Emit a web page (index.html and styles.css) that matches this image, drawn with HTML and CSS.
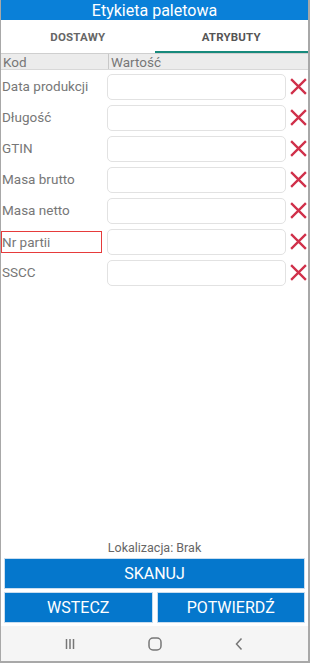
FILE: index.html
```html
<!DOCTYPE html>
<html lang="pl">
<head>
<meta charset="utf-8">
<title>Etykieta paletowa</title>
<link rel="stylesheet" href="styles.css">
</head>
<body>
<div class="screen">
  <div class="title">Etykieta paletowa</div>
  <div class="tabs">
    <div class="tab">DOSTAWY</div>
    <div class="tab active">ATRYBUTY</div>
  </div>
  <div class="colhead">
    <div class="ch-kod">Kod</div>
    <div class="ch-val">Wartość</div>
  </div>
  <div class="rows">
    <div class="row"><div class="label">Data produkcji</div><div class="input"></div><svg class="del" viewBox="0 0 18 18"><path d="M2 2L16 16M16 2L2 16"/></svg></div>
    <div class="row"><div class="label">Długość</div><div class="input"></div><svg class="del" viewBox="0 0 18 18"><path d="M2 2L16 16M16 2L2 16"/></svg></div>
    <div class="row"><div class="label">GTIN</div><div class="input"></div><svg class="del" viewBox="0 0 18 18"><path d="M2 2L16 16M16 2L2 16"/></svg></div>
    <div class="row"><div class="label">Masa brutto</div><div class="input"></div><svg class="del" viewBox="0 0 18 18"><path d="M2 2L16 16M16 2L2 16"/></svg></div>
    <div class="row"><div class="label">Masa netto</div><div class="input"></div><svg class="del" viewBox="0 0 18 18"><path d="M2 2L16 16M16 2L2 16"/></svg></div>
    <div class="row"><div class="label focused">Nr partii</div><div class="input"></div><svg class="del" viewBox="0 0 18 18"><path d="M2 2L16 16M16 2L2 16"/></svg></div>
    <div class="row"><div class="label">SSCC</div><div class="input"></div><svg class="del" viewBox="0 0 18 18"><path d="M2 2L16 16M16 2L2 16"/></svg></div>
  </div>
  <div class="spacer"></div>
  <div class="loc">Lokalizacja: Brak</div>
  <div class="actions">
    <button class="btn wide">SKANUJ</button>
    <div class="pair">
      <button class="btn">WSTECZ</button>
      <button class="btn">POTWIERDŹ</button>
    </div>
  </div>
  <div class="navbar">
    <svg class="nav" viewBox="0 0 20 20"><path d="M6.5 5V15M10 5V15M13.5 5V15"/></svg>
    <svg class="nav" viewBox="0 0 20 20"><rect x="4" y="4" width="12" height="12" rx="4"/></svg>
    <svg class="nav" viewBox="0 0 20 20"><path d="M12.5 4.5L7.5 10L12.5 15.5"/></svg>
  </div>
</div>
</body>
</html>
```
FILE: styles.css
```css
* { box-sizing: border-box; }
html, body { margin: 0; padding: 0; background: #fff; }
body { font-family: Roboto, "Noto Sans", sans-serif; }
.screen {
  width: 310px;
  height: 663px;
  display: flex;
  flex-direction: column;
  border-left: 1px solid #a8a8a8;
  border-right: 2px solid #a8a8a8;
  border-bottom: 2px solid #a8a8a8;
  overflow: hidden;
}
.title {
  height: 20px;
  background: #0a80d8;
  color: #fff;
  font-size: 16px;
  line-height: 21px;
  text-align: center;
}
.tabs {
  display: grid;
  grid-template-columns: 1fr 1fr;
  height: 33px;
  background: #fff;
}
.tab {
  display: flex;
  align-items: center;
  justify-content: center;
  font-size: 11.5px;
  font-weight: bold;
  color: #666;
  letter-spacing: 0.2px;
  border-bottom: 2px solid transparent;
  padding-top: 3px;
}
.tab.active { border-bottom-color: #178a7c; color: #555; }
.colhead {
  display: flex;
  height: 17px;
  background: #ececec;
  border-top: 1px solid #cfcfcf;
  border-bottom: 1px solid #d8d8d8;
  font-size: 13.5px;
  color: #777;
  line-height: 16px;
}
.ch-kod { width: 108px; padding-left: 2px; border-right: 1px solid #c8c8c8; }
.ch-val { padding-left: 2px; }
.rows { padding-top: 1px; display: flex; flex-direction: column; }
.row {
  display: flex;
  align-items: center;
  height: 31px;
}
.label {
  width: 106px;
  font-size: 13.5px;
  color: #777;
  padding-left: 1px;
  height: 22px;
  line-height: 21px;
}
.label.focused { border: 1px solid #e63b3b; width: 101px; padding-left: 0; line-height: 20px; }
.label.focused + .input { margin-left: 5px; }
.input {
  width: 179px;
  height: 26px;
  border: 1px solid #e2e2e2;
  border-radius: 5px;
  background: #fff;
}
.del {
  width: 19px;
  height: 19px;
  margin-left: 3px;
  fill: none;
  stroke: #d0304a;
  stroke-width: 2.2;
}
.spacer { flex: 1; }
.loc {
  text-align: center;
  font-size: 12.5px;
  color: #666;
  height: 20px;
  line-height: 20px;
}
.actions { display: flex; flex-direction: column; gap: 3px; padding: 0 3px; }
.pair { display: grid; grid-template-columns: 1fr 1fr; gap: 4px; }
.btn {
  border: 1px solid #c9ddef;
  background: #0577cc;
  color: #fff;
  font-family: Roboto, "Noto Sans", sans-serif;
  font-size: 16px;
  height: 31px;
  padding: 0;
  margin: 0;
}
.navbar {
  margin-top: 3px;
  height: 35px;
  flex: 0 0 35px;
  background: #f5f5f5;
  display: flex;
  justify-content: space-between;
  align-items: center;
  padding: 0 59px;
}
.nav {
  width: 20px;
  height: 20px;
  fill: none;
  stroke: #777;
  stroke-width: 1.5;
}
```
